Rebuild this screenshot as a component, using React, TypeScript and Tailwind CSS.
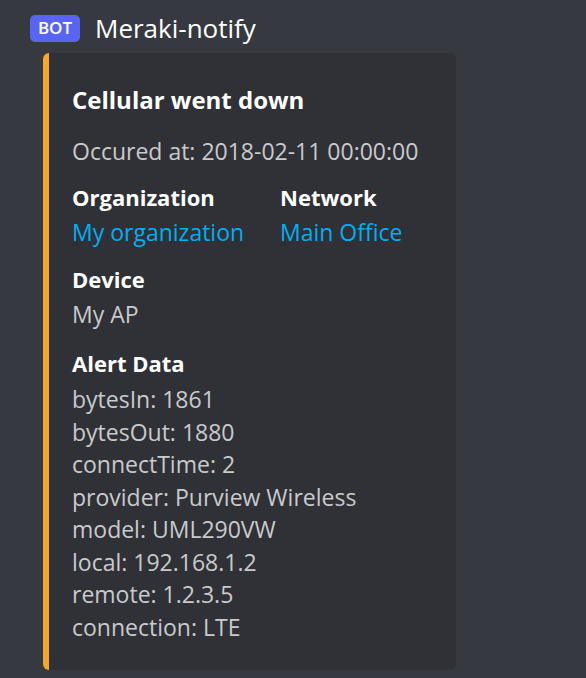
const alertData = [
  "bytesIn: 1861",
  "bytesOut: 1880",
  "connectTime: 2",
  "provider: Purview Wireless",
  "model: UML290VW",
  "local: 192.168.1.2",
  "remote: 1.2.3.5",
  "connection: LTE",
];

function Field({
  name,
  children,
}: {
  name: string;
  children: React.ReactNode;
}) {
  return (
    <div>
      <p className="text-[22px] font-bold leading-[32px] text-white">{name}</p>
      <div className="mt-[3px] text-[23px] leading-[32px]">{children}</div>
    </div>
  );
}

export default function App() {
  return (
    <div className="min-h-[678px] w-full bg-[#36393f] pt-[12px] font-['Open_Sans',sans-serif]">
      <div className="flex items-center pl-[30px]">
        <span className="flex h-[27px] w-[50px] items-center justify-center rounded-[5px] bg-[#5865f2] text-[17px] font-semibold text-white">
          BOT
        </span>
        <span className="ml-[15px] text-[26px] leading-[32px] text-white">
          Meraki-notify
        </span>
      </div>

      <div className="mt-[9px] ml-[43px] w-[413px] rounded-[6px] border-l-[6px] border-l-[#f8a626] bg-[#2f3136] pt-[31px] pr-[16px] pb-[27px] pl-[23px]">
        <h1 className="text-[24px] font-bold leading-[32px] text-white">
          Cellular went down
        </h1>

        <p className="mt-[19px] text-[23px] leading-[32px] text-[#c9cacc]">
          Occured at: 2018-02-11 00:00:00
        </p>

        <div className="mt-[14px] grid grid-cols-[208px_1fr] gap-y-[15px]">
          <Field name="Organization">
            <span className="text-[#00aff4]">My organization</span>
          </Field>
          <Field name="Network">
            <span className="text-[#00aff4]">Main Office</span>
          </Field>
          <div className="col-span-2">
            <Field name="Device">
              <span className="text-[#c9cacc]">My AP</span>
            </Field>
          </div>
          <div className="col-span-2 mt-[2px]">
            <p className="text-[22px] font-bold leading-[32px] text-white">
              Alert Data
            </p>
            <div className="mt-[4px] text-[23px] leading-[32.5px] text-[#c9cacc]">
              {alertData.map((line) => (
                <p key={line}>{line}</p>
              ))}
            </div>
          </div>
        </div>
      </div>
    </div>
  );
}
